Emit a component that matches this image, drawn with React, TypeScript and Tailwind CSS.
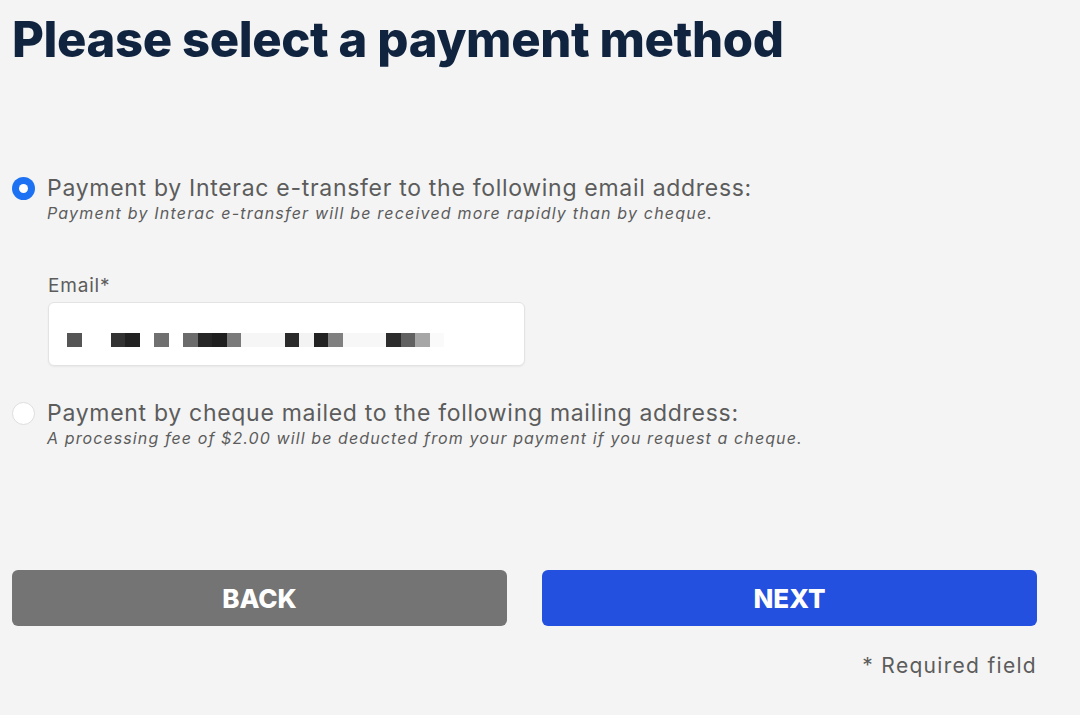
import React, { useState } from 'react'

const font = { fontFamily: 'Inter, "Noto Sans", sans-serif' }

// blurred email placeholder: [units, colour], one unit ≈ 14.5px
const blocks: [number, string][] = [
  [1, '#555'], [2, 'transparent'], [1, '#333'], [1, '#222'], [1, 'transparent'], [1, '#707070'],
  [1, 'transparent'], [1, '#6b6b6b'], [1, '#262626'], [1, '#1f1f1f'], [1, '#7a7a7a'],
  [3, '#f6f6f6'], [1, '#2a2a2a'], [1, '#f3f3f3'], [1, '#222'], [1, '#808080'],
  [3, '#f7f7f7'], [1, '#2c2c2c'], [1, '#616161'], [1, '#a6a6a6'], [1, '#fafafa'],
]

function Radio({ checked, onClick }: { checked: boolean; onClick: () => void }) {
  return (
    <button
      type="button"
      onClick={onClick}
      className={
        checked
          ? 'w-[23px] h-[23px] rounded-full bg-[#1d72f3] flex items-center justify-center shrink-0'
          : 'w-[23px] h-[23px] rounded-full bg-white border border-[#dedede] shrink-0'
      }
    >
      {checked && <span className="w-[9px] h-[9px] rounded-full bg-white" />}
    </button>
  )
}

export default function App() {
  const [method, setMethod] = useState<'interac' | 'cheque'>('interac')

  return (
    <div className="min-h-[715px] bg-[#f4f4f4] pl-[12px] pr-[43px] pt-[14px]" style={font}>
      <h1 className="text-[49px] font-extrabold leading-[52px] tracking-[-0.4px] text-[#10233f]">
        Please select a payment method
      </h1>

      {/* e-transfer */}
      <div className="mt-[107px] flex gap-[12px]">
        <div className="pt-[4px]">
          <Radio checked={method === 'interac'} onClick={() => setMethod('interac')} />
        </div>
        <div>
          <div className="text-[23px] leading-[30px] tracking-[0.7px] text-[#5c5c5c]">
            Payment by Interac e-transfer to the following email address:
          </div>
          <div className="text-[16px] italic leading-[20px] tracking-[1.2px] text-[#5c5c5c]">
            Payment by Interac e-transfer will be received more rapidly than by cheque.
          </div>
        </div>
      </div>

      <div className="ml-[36px] mt-[51px] w-[477px]">
        <label className="block text-[19px] leading-[24px] tracking-[0.8px] text-[#5c5c5c]">Email*</label>
        <div className="mt-[4px] h-[64px] rounded-[6px] border border-[#e3e3e3] bg-white shadow-[0_1px_2px_rgba(0,0,0,0.05)] flex items-center pl-[18px] pt-[12px]">
          <div className="flex items-center">
            {blocks.map(([u, c], i) => (
              <span key={i} className="h-[14px]" style={{ width: u * 14.5, background: c }} />
            ))}
          </div>
        </div>
      </div>

      {/* cheque */}
      <div className="mt-[32px] flex gap-[12px]">
        <div className="pt-[4px]">
          <Radio checked={method === 'cheque'} onClick={() => setMethod('cheque')} />
        </div>
        <div>
          <div className="text-[23px] leading-[30px] tracking-[0.7px] text-[#5c5c5c]">
            Payment by cheque mailed to the following mailing address:
          </div>
          <div className="text-[16px] italic leading-[20px] tracking-[1.1px] text-[#5c5c5c]">
            A processing fee of $2.00 will be deducted from your payment if you request a cheque.
          </div>
        </div>
      </div>

      <div className="mt-[122px] grid grid-cols-2 gap-[35px]">
        <button className="h-[56px] rounded-[6px] bg-[#747474] text-white text-[26px] font-extrabold">
          BACK
        </button>
        <button className="h-[56px] rounded-[6px] bg-[#2350df] text-white text-[26px] font-extrabold">
          NEXT
        </button>
      </div>

      <div className="mt-[24px] text-right text-[21px] tracking-[1.3px] text-[#5c5c5c]">* Required field</div>
    </div>
  )
}
